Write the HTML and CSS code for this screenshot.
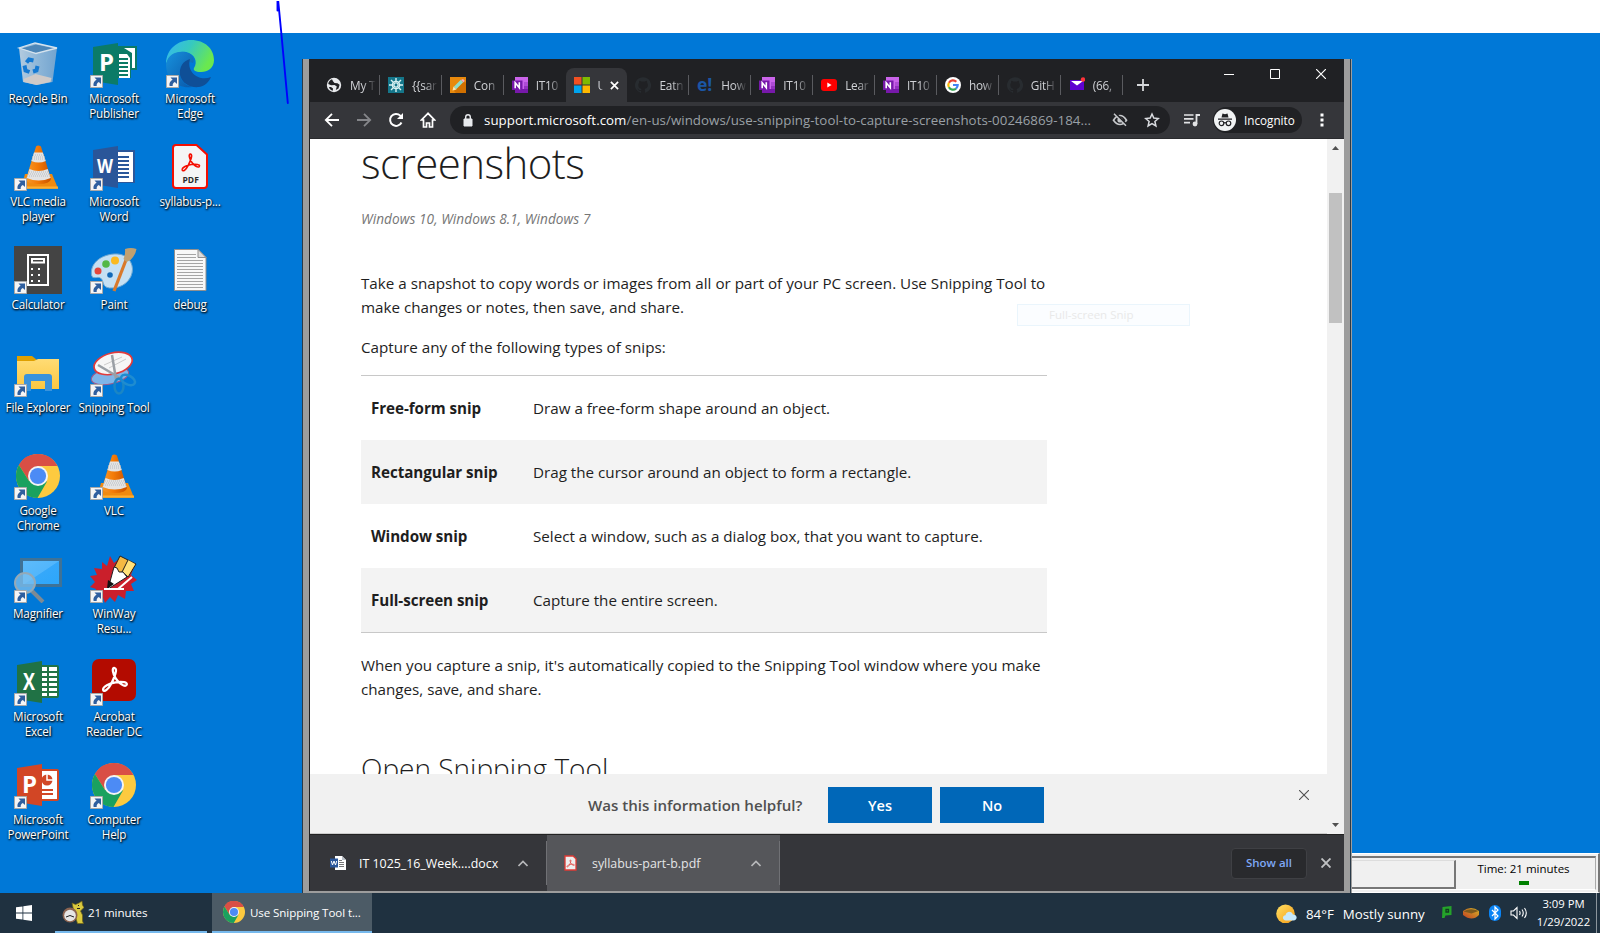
FILE: index.html
```
<!DOCTYPE html>
<html lang="en">
<head>
<meta charset="utf-8">
<title>Desktop</title>
<link rel="stylesheet" href="styles.css">
</head>
<body>
<svg class="defs" width="0" height="0" aria-hidden="true">
  <defs>
    <linearGradient id="edgeA" x1="0" x2="1" y1="0" y2=".4"><stop offset="0" stop-color="#35b5f5"/><stop offset=".5" stop-color="#36c9c0"/><stop offset="1" stop-color="#6ae84f"/></linearGradient>
    <linearGradient id="edgeB" x1="0" x2="1" y1="0" y2="1"><stop offset="0" stop-color="#1791dd"/><stop offset="1" stop-color="#0a57a8"/></linearGradient>
    <linearGradient id="cone" x1="0" x2="1"><stop offset="0" stop-color="#f59a2a"/><stop offset=".45" stop-color="#f47b07"/><stop offset="1" stop-color="#c95200"/></linearGradient>
    <linearGradient id="bin" x1="0" x2="1"><stop offset="0" stop-color="#b4cbdf"/><stop offset=".5" stop-color="#8db6d8"/><stop offset="1" stop-color="#73a4cf"/></linearGradient>
    <linearGradient id="screen" x1="0" x2="1" y1="0" y2="1"><stop offset="0" stop-color="#5fbcfb"/><stop offset=".5" stop-color="#52b6fb"/><stop offset=".52" stop-color="#35a8fa"/><stop offset="1" stop-color="#2ba6fb"/></linearGradient>
    <linearGradient id="sun" x1="0" x2="1" y1="0" y2="1"><stop offset="0" stop-color="#ffe166"/><stop offset="1" stop-color="#f59a12"/></linearGradient>
    <linearGradient id="folder" x1="0" x2="0" y1="0" y2="1"><stop offset="0" stop-color="#ffdc75"/><stop offset="1" stop-color="#fbc741"/></linearGradient>
    <linearGradient id="basket" x1="1" x2="0" y1="0" y2="1"><stop offset="0" stop-color="#d5b528"/><stop offset="1" stop-color="#c23f22"/></linearGradient>
    <symbol id="arrow" viewBox="0 0 13 13"><path fill="#f5f5f5" stroke="#a9a9a9" d="M.5.5h12v12H.5z"/><path fill="#2f5f9f" d="M4.500 2.500H11v6.500L8.800 6.900C7 7.800 6.500 9 6.700 11H3.600C2.800 8 4.400 5.900 6.600 4.700z"/></symbol>
    <symbol id="chrome" viewBox="0 0 48 48"><circle cx="24" cy="24" r="22" fill="#fdca3f"/><path fill="#d94f45" d="M4.900 13A22 22 0 0 1 43.200 13.500L24 14z"/><path fill="#d94f45" d="M4.900 13A22 22 0 0 1 43.300 14H24L15 29z"/><path fill="#1aa15f" d="M4.900 13A22 22 0 0 0 23.500 46L33 29.500 15 29z"/><circle cx="24" cy="24" r="10" fill="#f4f4f4"/><circle cx="24" cy="24" r="8.100" fill="#4c8bf5"/></symbol>
    <symbol id="vlc" viewBox="0 0 48 48"><path fill="#f08a10" d="M11 31h27l6 14.500H7z"/><path fill="#ffae2e" d="M7 43.500h37v2.300H7z"/><path fill="url(#cone)" d="M22 3.500q2-2 5 0L37 36q-1 5-12.500 5T12 36z"/><path fill="#e3e3e3" d="M20 9.500h8.800l3 8.500q-7 3-14.500 0zM15.500 26q9 4 18.200 0l3 9q-12 5-24 0z"/><path fill="none" stroke="#b5bcc2" stroke-dasharray="1 1" d="M19 12h11M18 14h13M18 16h13M15 29h20M14 31h21M13 33h23"/></symbol>
    <symbol id="acro" viewBox="0 0 24 24"><path fill="none" stroke="currentColor" stroke-width="1.900" stroke-linejoin="round" d="M12.200 2.500C9.300 2 10.800 7.500 13 11c2.400 4 7.500 7.600 9 5.500 1.500-2.300-4-3-9-2.200C8 15 2 17.800 2.600 20.600c.7 2.400 4.400-.6 6.800-5.300C12 10 14.800 3 12.200 2.500z"/></symbol>
    <symbol id="onenote" viewBox="0 0 16 16"><path fill="#ca64ea" d="M3 0h13v5H3z"/><path fill="#ca64ea" d="M3 4h9v8H3z"/><path fill="#ae4bd5" d="M12 5h4v4h-4z"/><path fill="#9332bf" d="M12 9h4v3h-4z"/><path fill="#7719aa" d="M3 12h13v4H3zM0 3.500h10.500V13H0z"/><path fill="none" stroke="#fff" stroke-width="1.600" d="M3.200 11.200V5.800L7.300 10.700V5.300"/></symbol>
    <symbol id="github" viewBox="0 0 16 16"><path fill="#282c30" d="M8 .2a8 8 0 0 0-2.500 15.600c.4 0 .5-.2.500-.4v-1.500c-2 .4-2.600-.7-2.800-1.200-.3-.6-.6-.9-1-1.100.8-.1 1.200.3 1.500.8.500.8 1.300.9 2.400.6.1-.5.300-.9.600-1.100-2-.3-3.400-1-3.400-3.800 0-1 .3-1.700.8-2.300-.1-.6-.1-1.300.2-2 .8 0 1.500.4 2 .8a8 8 0 0 1 3.600 0c.6-.4 1.300-.8 2-.8.300.7.300 1.400.2 2 .5.600.8 1.300.8 2.300 0 2.800-1.500 3.500-3.400 3.800.4.400.6 1 .6 1.800v1.700c0 .2.100.4.500.4A8 8 0 0 0 8 .2z"/></symbol>
    <symbol id="globe" viewBox="0 0 16 16"><circle cx="8" cy="8" r="7.200" fill="#e8eaed"/><path fill="#202124" d="M6 2.200C3.800 3 2.400 5 2.300 7l2.800 1.300L8.500 8l2.300 1.500-1 3.500 2.700-1.600 1.100-3.700-2.100-1.500-3-.2L7 4.300zM5 10l2 1.500-.2 2.300C5 13.500 3.500 12 3 10z"/></symbol>
  </defs>
</svg>

<div class="screen">
  <div class="top-blank"></div>
  <div class="desktop">
    <div class="icons">
      <div class="app"><svg class="pic" viewBox="0 0 48 48"><path fill="url(#bin)" d="M5 8l16-5 22 5-4.500 34-16 3L9 42z"/><path fill="#4c86b8" d="M7 8.500l15-4 19 4-17 5z"/><path fill="none" stroke="#d5e3ee" stroke-width="1.300" d="M5 8l17 5.500L43 8 21 3z"/><path fill="#cfcac8" d="M9.500 39l12-5 16 4-1 4-14 3L10 42z"/><g fill="none" stroke="#1479d2" stroke-width="4"><path d="M12.500 22.500l2.500-3 4.500 1M10.500 25.500l1 5 4 1.500M19 31.500l3.500-1 1-4.500"/></g></svg><span>Recycle Bin</span></div>
      <div class="app"><svg class="pic" viewBox="0 0 48 48"><path fill="#0c7a66" d="M28 6h19v24h-6v8H28z"/><path fill="#fff" d="M34 8h11v20h-3V13zM29 14h8l3 4v20H29z"/><path stroke="#0c7a66" stroke-width="2" d="M29 19h9M29 23h9M29 27h9M29 31h9M29 35h9"/><path fill="#0b7b67" d="M3 7l25-4v42L3 41z"/><text x="9" y="31" class="logo">P</text></svg><svg class="lnk"><use href="#arrow"/></svg><span>Microsoft<br>Publisher</span></div>
      <div class="app"><svg class="pic" viewBox="0 0 48 48"><path fill="url(#edgeA)" d="M0 24C0 9 12 0 25 0c14 0 23 9 23 20 0 8-6 12-13 12-6 0-8-2-7-4 4-6 1-14-8-16C11 11 4 15 0 24z"/><path fill="url(#edgeB)" d="M0 24C2 14 11 11 18 12c8 1 11 7 9 11-8-4-15 4-13 12 1 6 5 10 12 12C11 49 0 39 0 24z"/><path fill="#0f4f97" d="M24 19c-7 2-11 8-10 16 2 9 11 13 19 12 6-1 10-5 12-10-12 5-25-5-21-18z"/></svg><svg class="lnk"><use href="#arrow"/></svg><span>Microsoft<br>Edge</span></div>

      <div class="app"><svg class="pic"><use href="#vlc"/></svg><svg class="lnk"><use href="#arrow"/></svg><span>VLC media<br>player</span></div>
      <div class="app"><svg class="pic" viewBox="0 0 48 48"><path fill="#2b579a" d="M26 7h19v33H26z"/><path fill="#fff" d="M27 9h16v30H27z"/><path stroke="#2b579a" stroke-width="2" d="M28 14h11M28 18h11M28 22h11M28 26h11M28 30h11M28 34h11"/><path fill="#2a5699" d="M3 7l25-4v42L3 41z"/><text x="7" y="30" class="logo logo-w" textLength="16" lengthAdjust="spacingAndGlyphs">W</text></svg><svg class="lnk"><use href="#arrow"/></svg><span>Microsoft<br>Word</span></div>
      <div class="app"><svg class="pic" viewBox="0 0 48 48"><path fill="#f5f5f5" stroke="#f40f02" stroke-width="2" d="M10 2h20.500L41 11.500V42q0 3-3 3H10q-3 0-3-3V5q0-3 3-3z"/><svg x="14" y="9" width="21" height="21" color="#f40f02"><use href="#acro"/></svg><text x="16.500" y="39.500" class="logo logo-pdf">PDF</text></svg><span>syllabus-p...</span></div>

      <div class="app"><svg class="pic" viewBox="0 0 48 48"><path fill="#444" d="M0 0h48v48H0z"/><path fill="none" stroke="#fff" stroke-width="2" d="M14 9h20v30H14zM18 13h12v3.500H18z"/><path stroke="#fff" stroke-width="2" stroke-dasharray="2 5" d="M17 23h14M17 29h14M17 35h14"/></svg><svg class="lnk"><use href="#arrow"/></svg><span>Calculator</span></div>
      <div class="app"><svg class="pic" viewBox="0 0 48 48"><path fill="#c5e0f3" stroke="#6ea8d2" d="M24 8C10 9 0 18 1.500 29c1 5 6 1 9 3 4 3 1 9 9 10 13 1 23-8 23-19C42 13 34 7 24 8z"/><circle cx="8" cy="25" r="3.500" fill="#e3463c"/><circle cx="16" cy="18" r="3.800" fill="#53b848"/><circle cx="25" cy="14.500" r="4" fill="#fbb91f"/><circle cx="20" cy="29" r="2.800" fill="#1169b8"/><path stroke="#d9792b" stroke-width="3.200" d="M24 45l12-31"/><path fill="#c0a070" d="M35 3q6-2 11.500 0-1 6-6 11l-4 2-3-3q2-5 1.500-10z"/></svg><svg class="lnk"><use href="#arrow"/></svg><span>Paint</span></div>
      <div class="app"><svg class="pic" viewBox="0 0 48 48"><path fill="#f8f8f8" stroke="#909090" d="M8.500 3.500h23.500l8 8v33H8.500z"/><path fill="#ddd" stroke="#909090" d="M32 3.500v8h8z"/><path stroke="#a5a5a5" d="M11 8.500h19M11 11.500h19M11 14.500h26M11 17.500h26M11 20.500h26M11 23.500h26M11 26.500h26M11 29.500h26M11 32.500h26M11 35.500h26M11 38.500h26M11 41.500h26"/></svg><span>debug</span></div>

      <div class="app"><svg class="pic" viewBox="0 0 48 48"><path fill="#dfa000" d="M3 7h15l5 4v5H3z"/><path fill="url(#folder)" d="M3 12h17l4-2h21v30H3z"/><path fill="#3a93dc" d="M10 28q0-3 3-3h22q3 0 3 3v14h-7V32H17v10h-7z"/></svg><svg class="lnk"><use href="#arrow"/></svg><span>File Explorer</span></div>
      <div class="app"><svg class="pic" viewBox="0 0 48 48"><ellipse cx="20" cy="27" rx="19" ry="8" fill="#7fb5e8" stroke="#a05a8a" transform="rotate(-12 20 27)"/><ellipse cx="23" cy="14.500" rx="19.500" ry="10.500" fill="#f6f6f6" stroke="#e23b3b" stroke-width="1.700" transform="rotate(-14 23 14)"/><path stroke="#ccc" d="M14 16l18-8M19 19l17-9"/><path stroke="#9a9fa5" stroke-width="2.500" d="M22 6l4 24M8 16l22 13"/><ellipse cx="29" cy="37" rx="4.500" ry="7.500" fill="none" stroke="#1b86c4" stroke-width="2.500"/><ellipse cx="38" cy="31" rx="7.500" ry="4.500" fill="none" stroke="#1e8cd0" stroke-width="2.500" transform="rotate(28 38 31)"/></svg><svg class="lnk"><use href="#arrow"/></svg><span>Snipping Tool</span></div>
      <div></div>

      <div class="app"><svg class="pic"><use href="#chrome"/></svg><svg class="lnk"><use href="#arrow"/></svg><span>Google<br>Chrome</span></div>
      <div class="app"><svg class="pic"><use href="#vlc"/></svg><svg class="lnk"><use href="#arrow"/></svg><span>VLC</span></div>
      <div></div>

      <div class="app"><svg class="pic" viewBox="0 0 48 48"><path fill="url(#screen)" stroke="#3f7296" stroke-width="3" d="M7.500 4.500h39v26h-39z"/><path stroke="#7d8a94" stroke-width="4" d="M18 36l11 11"/><circle cx="11" cy="28" r="10" fill="#7fc0ee" fill-opacity=".75" stroke="#93a9b8" stroke-width="2"/></svg><svg class="lnk"><use href="#arrow"/></svg><span>Magnifier</span></div>
      <div class="app"><svg class="pic" viewBox="0 0 48 48"><path fill="#ca1f2b" d="M20 1l4 7 7-6 3 9 10 1-3 8 6 5-6 4 3 7-8 0-1 8-7-4-3 7-5-5-5 6-3-8-8 2 2-8-6-2 5-5-5-6 7-1-3-7 8 1 0-7 5 4z"/><path fill="#f5b942" stroke="#222" d="M30 1l16 8-8 13-5-5-5 1-4-5z"/><path fill="#ffe27a" d="M38 5l7 4-7 12-5-4z"/><path stroke="#222" d="M38 5l-6 12"/><path fill="#fff" stroke="#222" d="M24 12l3 1 2 4 4 0 4 5-19 12z"/><path fill="#111" d="M18 25l6 4-7 5z"/><path fill="none" stroke="#fff" stroke-width="2" d="M14 34h20M28 34l14-12"/></svg><svg class="lnk"><use href="#arrow"/></svg><span>WinWay<br>Resu...</span></div>
      <div></div>

      <div class="app"><svg class="pic" viewBox="0 0 48 48"><path fill="#217346" d="M26 7h17q2 0 2 2v29q0 2-2 2H26z"/><path fill="#fff" d="M27 9h16v29H27z"/><path fill="none" stroke="#217346" stroke-width="2" d="M27 14h16M27 19h16M27 24h16M27 29h16M27 34h16M34 9v29"/><path fill="#207245" d="M3 7l25-4v42L3 41z"/><text x="9" y="32" class="logo" textLength="12" lengthAdjust="spacingAndGlyphs">X</text></svg><svg class="lnk"><use href="#arrow"/></svg><span>Microsoft<br>Excel</span></div>
      <div class="app"><svg class="pic" viewBox="0 0 48 48"><rect x="2" y="1" width="44" height="42" rx="7" fill="#b30b00"/><svg x="10" y="7" width="29" height="29" color="#fff"><use href="#acro"/></svg></svg><svg class="lnk"><use href="#arrow"/></svg><span>Acrobat<br>Reader DC</span></div>
      <div></div>

      <div class="app"><svg class="pic" viewBox="0 0 48 48"><path fill="#d24726" d="M26 8h17q2 0 2 2v28q0 2-2 2H26z"/><path fill="#fff" d="M28 10h15v28H28z"/><circle cx="33" cy="19" r="5.500" fill="#d24726"/><path fill="none" stroke="#fff" stroke-width="1.500" d="M33 13v6h6"/><path stroke="#d24726" stroke-width="2" d="M28 29h11M28 33h11"/><path fill="#d24625" d="M3 7l25-4v42L3 41z"/><text x="8" y="32" class="logo">P</text></svg><svg class="lnk"><use href="#arrow"/></svg><span>Microsoft<br>PowerPoint</span></div>
      <div class="app"><svg class="pic"><use href="#chrome"/></svg><svg class="lnk"><use href="#arrow"/></svg><span>Computer<br>Help</span></div>
      <div></div>
    </div>

    <div class="timer">
      <div class="timer-in"><div class="timer-box"></div><div class="timer-side"><span>Time: 21 minutes</span><i></i></div></div>
    </div>
  </div>

  <div class="taskbar">
    <div class="start"><svg width="16" height="16" viewBox="0 0 16 16"><path fill="#fff" d="M0 2.300l6.500-.9v6.100H0zM7.300 1.200L16 0v7.500H7.300zM0 8.400h6.500v6.200L0 13.700zM7.300 8.400H16V16l-8.700-1.200z"/></svg></div>
    <div class="task t1"><svg width="22" height="24" viewBox="0 0 22 24"><path fill="#d9c93f" stroke="#6e6216" stroke-width=".7" d="M10 3l3.500 1.500L17 3l3-2 .5 4L22 7.500 18.500 11l2 4v6l1 2.500h-6L12 12z"/><circle cx="8" cy="15" r="7.500" fill="#8a6350"/><circle cx="8" cy="15.500" r="5.800" fill="#e6e6e6"/><path fill="none" stroke="#222" d="M4 17l4-1.500 4 1.500M16 5.500h1M15 8.500h3"/></svg><span>21 minutes</span></div>
    <div class="task t2"><svg width="24" height="24"><use href="#chrome"/></svg><span>Use Snipping Tool t...</span></div>
    <div class="fill"></div>
    <div class="weather"><svg width="21" height="20" viewBox="0 0 21 20"><circle cx="9.500" cy="9.800" r="9.300" fill="url(#sun)"/><path fill="#c6e8fb" d="M10 16.500c-4 0-4-5-.5-5.200C10 7 16 6.600 16.800 10.500c5-.3 5 6 .7 6z"/></svg><span>84°F</span><span>Mostly sunny</span></div>
    <div class="tray">
      <svg width="24" height="20" viewBox="0 0 24 20"><path fill="#25a32a" d="M7.500 4l9-1v9l-6 .6L9.500 15H7z"/><path fill="none" stroke="#123f20" stroke-width="1.300" d="M11 6.500h2.500V9H11z"/></svg>
      <svg width="24" height="20" viewBox="0 0 24 20"><path fill="url(#basket)" d="M4 8q8-6 16 0v4q-7 7-16 0z"/><path fill="#7d5a1e" d="M4.500 8.500q7-4 15-.5l-7 2.500z"/></svg>
      <svg width="24" height="20" viewBox="0 0 24 20"><rect x="6" y="2" width="12" height="16" rx="6" fill="#0a84f5"/><path fill="none" stroke="#fff" stroke-width="1.200" d="M9 7l6 6-3 3V4l3 3-6 6"/></svg>
      <svg width="24" height="20" viewBox="0 0 24 20"><path fill="none" stroke="#fff" stroke-width="1.100" d="M4 8v4h2.500l3.500 3.500v-11L6.500 8zM12.500 8q1.200 2 0 4M15 6.500q2.500 3.500 0 7M17.500 5q3.600 5 0 10"/></svg>
    </div>
    <div class="clock"><span>3:09 PM</span><span>1/29/2022</span></div>
  </div>

  <div class="window">
    <div class="tabs">
      <div class="tab"><svg><use href="#globe"/></svg><span>My T</span></div>
      <div class="tab"><svg viewBox="0 0 16 16"><path fill="#15768a" d="M0 0h16v16H0z"/><g stroke="#d8f1f2" stroke-width="1.400"><path d="M8 1v14M1 8h14M3 3l10 10M13 3L3 13"/><circle cx="8" cy="8" r="3.600" fill="none"/></g><circle cx="8" cy="8" r="1.400" fill="#15768a"/></svg><span>{{sar</span></div>
      <div class="tab"><svg viewBox="0 0 16 16"><path fill="#e8890c" d="M0 0h16v16H0z"/><path fill="#d17000" d="M4 14L14 4l2 2v10H6z"/><path stroke="#8fdcc9" stroke-width="3.400" d="M5 11l7-7"/><path fill="#f7a8c4" d="M11 3l2-1 1.500 1.500L14 5.500z"/><path fill="#fbe4b0" d="M2.500 13.500l1-4 3 3z"/></svg><span>Con</span></div>
      <div class="tab"><svg><use href="#onenote"/></svg><span>IT10</span></div>
      <div class="tab active"><svg viewBox="0 0 16 16"><path fill="#f25022" d="M0 0h7.500v7.500H0z"/><path fill="#7fba00" d="M8.500 0H16v7.500H8.500z"/><path fill="#00a4ef" d="M0 8.500h7.500V16H0z"/><path fill="#ffb900" d="M8.500 8.500H16V16H8.500z"/></svg><span>U</span><svg class="x" viewBox="0 0 10 10"><path stroke="#fff" stroke-width="1.900" d="M1 1l8 8M9 1L1 9"/></svg></div>
      <div class="tab"><svg><use href="#github"/></svg><span>Eatn</span></div>
      <div class="tab"><svg viewBox="0 0 16 16"><text x="0" y="14" class="e" textLength="15" lengthAdjust="spacingAndGlyphs">e!</text></svg><span>How</span></div>
      <div class="tab"><svg><use href="#onenote"/></svg><span>IT10</span></div>
      <div class="tab"><svg viewBox="0 0 16 16"><rect y="2" width="16" height="12" rx="3" fill="#f00"/><path fill="#fff" d="M6.300 5.500v5L10.600 8z"/></svg><span>Lear</span></div>
      <div class="tab"><svg><use href="#onenote"/></svg><span>IT10</span></div>
      <div class="tab"><svg viewBox="0 0 16 16"><circle cx="8" cy="8" r="8" fill="#fff"/><g fill="none" stroke-width="2.200"><path stroke="#ea4335" d="M3.900 5.700A4.700 4.700 0 0 1 11.300 4.700"/><path stroke="#fbbc05" d="M3.900 5.700a4.700 4.700 0 0 0 0 4.600"/><path stroke="#34a853" d="M3.900 10.300A4.700 4.700 0 0 0 11 11.600"/><path stroke="#4285f4" d="M11 11.600A4.700 4.700 0 0 0 12.700 8H8"/></g></svg><span>how</span></div>
      <div class="tab"><svg><use href="#github"/></svg><span>GitH</span></div>
      <div class="tab"><svg viewBox="0 0 16 16"><path fill="#5f01d1" d="M1 3h14v10H1z"/><path fill="#fff" d="M2 4h12L8 8.500z"/><circle cx="14" cy="2.500" r="2.200" fill="#ff333a"/></svg><span>(66,</span></div>
      <svg class="plus" viewBox="0 0 12 12"><path stroke="#d5d7da" stroke-width="1.800" d="M6 0v12M0 6h12"/></svg>
      <div class="fill"></div>
      <div class="controls"><svg width="10" height="10"><path stroke="#fff" d="M0 5.500h10"/></svg><svg width="10" height="10"><path fill="none" stroke="#fff" d="M.5.500h9v9h-9z"/></svg><svg width="10" height="10"><path stroke="#fff" stroke-width="1.200" d="M0 0l10 10M10 0L0 10"/></svg></div>
    </div>

    <div class="toolbar">
      <svg viewBox="0 0 16 16"><path fill="none" stroke="#fff" stroke-width="1.800" d="M15 8H2M8 1.800L1.800 8 8 14.200"/></svg>
      <svg viewBox="0 0 16 16"><path fill="none" stroke="#85868a" stroke-width="1.800" d="M1 8h13M8 1.800L14.200 8 8 14.200"/></svg>
      <svg viewBox="0 0 16 16"><path fill="none" stroke="#fff" stroke-width="2" d="M13.500 10.500A6 6 0 1 1 12.300 3.600L14 5.300"/><path fill="#fff" d="M15 1v6H9z"/></svg>
      <svg viewBox="0 0 16 16"><path fill="none" stroke="#fff" stroke-width="1.700" d="M8 1.300L1.500 8H3.500v7H6.500v-4h3v4h3V8h2z"/></svg>
      <div class="omni">
        <svg width="10" height="13" viewBox="0 0 10 13"><path fill="#e8eaed" d="M1 5h8v7H1z" stroke="#e8eaed"/><path fill="none" stroke="#e8eaed" stroke-width="1.400" d="M2.700 5V3a2.300 2.300 0 0 1 4.600 0v2"/></svg>
        <span class="url"><b>support.microsoft.com</b>/en-us/windows/use-snipping-tool-to-capture-screenshots-00246869-184...</span>
        <svg width="16" height="14" viewBox="0 0 16 14"><path fill="none" stroke="#c6c8cb" stroke-width="1.700" d="M1.500 7.200Q4.500 2.500 8 2.500t6.500 4.700Q11.500 11.500 8 11.500t-6.500-4.300z"/><circle cx="8" cy="7" r="2.600" fill="#c6c8cb"/><path stroke="#202124" stroke-width="2" d="M3.500.5l12 12"/><path stroke="#c6c8cb" stroke-width="1.500" d="M2 .8l12 12"/></svg>
        <svg width="16" height="16" viewBox="0 0 16 16"><path fill="none" stroke="#dadce0" stroke-width="1.500" d="M8 2l1.800 4.100 4.500.4-3.400 3 1 4.400L8 11.600l-3.900 2.300 1-4.400-3.400-3 4.500-.4z"/></svg>
      </div>
      <svg class="list" viewBox="0 0 16 14"><path stroke="#e2e3e5" stroke-width="1.700" d="M0 2h9.500M0 5.800h9.500M0 9.600h6"/><path fill="none" stroke="#e2e3e5" stroke-width="1.800" d="M12.500 11V2H16"/><circle cx="11" cy="11" r="2.400" fill="#e2e3e5"/></svg>
      <div class="incog"><svg width="22" height="22" viewBox="0 0 22 22"><circle cx="11" cy="11" r="11" fill="#f1f3f4"/><path fill="#202124" d="M7.500 8.500L8.500 4.600l2.500.7 2.500-.7 1 3.900zM4 9.600h14v1.200H4z"/><g fill="none" stroke="#202124" stroke-width="1.200"><circle cx="7.500" cy="14.300" r="2.300"/><circle cx="14.500" cy="14.300" r="2.300"/><path d="M9.800 14q1.200-.8 2.400 0"/></g></svg><span>Incognito</span></div>
      <svg class="dots" viewBox="0 0 4 14"><path fill="#fff" d="M.5.500h3v3h-3zM.5 5.500h3v3h-3zM.5 10.500h3v3h-3z"/></svg>
    </div>

    <div class="view">
      <div class="page">
        <div class="article">
          <h1>screenshots</h1>
          <p class="applies">Windows 10, Windows 8.1, Windows 7</p>
          <p class="intro">Take a snapshot to copy words or images from all or part of your PC screen. Use Snipping Tool to<br>make changes or notes, then save, and share.</p>
          <p class="cap">Capture any of the following types of snips:</p>
          <div class="table">
            <div class="row"><b>Free-form snip</b><span>Draw a free-form shape around an object.</span></div>
            <div class="row"><b>Rectangular snip</b><span>Drag the cursor around an object to form a rectangle.</span></div>
            <div class="row"><b>Window snip</b><span>Select a window, such as a dialog box, that you want to capture.</span></div>
            <div class="row"><b>Full-screen snip</b><span>Capture the entire screen.</span></div>
          </div>
          <p class="after">When you capture a snip, it's automatically copied to the Snipping Tool window where you make<br>changes, save, and share.</p>
          <h2>Open Snipping Tool</h2>
        </div>
        <div class="helpful">
          <span class="q">Was this information helpful?</span><div class="btn">Yes</div><div class="btn">No</div>
          <svg class="hx" width="10" height="10"><path stroke="#505050" stroke-width="1.100" d="M0 0l10 10M10 0L0 10"/></svg>
        </div>
      </div>
      <div class="scroll"><svg width="17" height="17"><path fill="#505050" d="M5 11h7L8.500 7z"/></svg><div class="thumb"></div><div class="fill"></div><svg width="17" height="17"><path fill="#505050" d="M5 6h7l-3.500 4z"/></svg></div>
      <div class="ghost">Full-screen Snip</div>
    </div>

    <div class="downloads">
      <div class="dl d1"><svg width="16" height="16" viewBox="0 0 16 16"><path fill="#fff" d="M5 1h7l4 4v10H5z"/><path fill="#b9c0c8" d="M12 1v4h4z"/><path stroke="#777" d="M9 5.500h3M9 7.500h5M9 9.500h5M9 11.500h5"/><path fill="#2b579a" d="M0 3.500h8v9H0z"/><path fill="none" stroke="#fff" d="M1.300 6l1.200 4L4 6l1.500 4 1.200-4"/></svg><span>IT 1025_16_Week....docx</span><svg class="chev" width="10" height="7"><path fill="none" stroke="#b8b9bb" stroke-width="1.600" d="M.5 6L5 1.500 9.500 6"/></svg></div>
      <div class="dl d2"><svg width="16" height="16" viewBox="0 0 16 16"><path fill="#eee" stroke="#e03a34" stroke-width="1.300" d="M3.500 1h6.500L13 3.800V15H2V1z"/><svg x="3" y="4" width="9" height="9" color="#e03a34"><use href="#acro"/></svg></svg><span>syllabus-part-b.pdf</span><svg class="chev" width="10" height="7"><path fill="none" stroke="#b8b9bb" stroke-width="1.600" d="M.5 6L5 1.500 9.500 6"/></svg></div>
      <div class="fill"></div>
      <div class="showall">Show all</div>
      <svg class="dx" width="10" height="10"><path stroke="#c0c1c3" stroke-width="1.900" d="M.5.500l9 9M9.500.500l-9 9"/></svg>
    </div>
  </div>

  <svg class="pen" width="20" height="110"><path fill="none" stroke="#00f" stroke-width="1.900" stroke-linecap="round" d="M7.500 10.500V2h.8l3 31 6.500 70"/></svg>
</div>
</body>
</html>
```
FILE: styles.css
```
* { box-sizing: border-box; }
body { margin: 0; font-family: "Open Sans", "Noto Sans", sans-serif; }
.defs { position: absolute; }
.screen { position: relative; width: 1600px; height: 933px; overflow: hidden; display: flex; flex-direction: column; background: #0078d7; }
.top-blank { height: 33px; background: #fff; }
.desktop { flex: 1; position: relative; padding: 7px 0 0; }
.fill { flex: 1; }
svg { display: block; flex: none; }
p, h1, h2 { margin: 0; }

/* desktop icons */
.icons { display: grid; grid-template-columns: repeat(3, 76px); grid-auto-rows: 103px; }
.app { position: relative; display: flex; flex-direction: column; align-items: center; gap: 2.500px; color: #fff; text-align: center; font-size: 11.700px; line-height: 15px; white-space: nowrap; text-shadow: 1px 1px 2px #000, 0 1px 2px rgba(0,0,0,.8); }
.app span { letter-spacing: -.2px; }
.pic { width: 48px; height: 48px; }
.lnk { position: absolute; left: 14px; top: 35px; width: 13px; height: 13px; }
.logo { font: bold 24px "Open Sans", sans-serif; fill: #fff; text-shadow: none; }
.logo-w { font-size: 20px; }
.logo-pdf { font-size: 8.500px; fill: #2c2c2c; }

/* timer strip */
.timer { position: absolute; right: 0; bottom: 0; width: 249px; height: 40px; background: #f0f0f0; border: 1px solid #fff; border-right: 2px solid #777; padding: 2px 2px 2px 0; }
.timer-in { height: 100%; display: flex; border-top: 2px solid #777; border-right: 1px solid #aaa; border-bottom: 1px solid #fff; }
.timer-box { width: 104px; height: 29px; margin-top: 2px; border-top: 1px solid #ddd; border-right: 2px solid #777; border-bottom: 2px solid #777; }
.timer-side { flex: 1; display: flex; flex-direction: column; align-items: center; padding: 2px 4px 0 0; font-size: 11.500px; line-height: 18px; color: #000; }
.timer-side i { width: 10px; height: 4px; margin-top: 3px; background: #008000; }

/* taskbar */
.taskbar { height: 40px; background: #1f3140; display: flex; color: #fff; font-size: 11.600px; }
.start { width: 55px; padding: 12px 0 0 16px; }
.task { display: flex; align-items: center; border-bottom: 2px solid #76b9ed; white-space: nowrap; letter-spacing: -.1px; }
.t1 { width: 152px; padding-left: 7px; gap: 4px; }
.t2 { width: 160px; margin-left: 5px; padding-left: 10px; gap: 4px; background: #4c5b66; }
.weather { display: flex; align-items: center; gap: 9px; width: 159px; padding-top: 1px; font-size: 13.300px; white-space: nowrap; }
.tray { display: flex; align-items: center; }
.clock { width: 66px; margin-right: 3px; border-right: 1px solid #8b959d; display: flex; flex-direction: column; align-items: center; line-height: 18px; padding: 2px 0 0; font-size: 11.300px; }

/* browser window */
.window { position: absolute; left: 302px; top: 59px; width: 1050px; height: 834px; border: solid #9d9d9d; border-width: 0 7px 2px; display: flex; flex-direction: column; background: #202124; padding: 0 0 0 1px; }
.window::before, .window::after { content: ""; position: absolute; top: 0; bottom: -2px; width: 1px; background: #2a3a48; }
.window::before { left: -7px; }
.window::after { right: -7px; }
.window { border-right-width: 8px; }
.tabs { height: 43px; display: flex; padding-left: 8px; position: relative; }
.tab { width: 61.900px; height: 34px; margin-top: 9px; padding-left: 8px; display: flex; align-items: center; gap: 8px; position: relative; color: #d0d2d6; font-size: 11.800px; line-height: 18px; letter-spacing: -.2px; }
.tab::after { content: ""; position: absolute; right: 0; top: 7px; width: 1px; height: 20px; background: #5a5b5f; }
.tab > svg { width: 16px; height: 16px; }
.tab span { width: 26px; white-space: nowrap; -webkit-mask-image: linear-gradient(90deg, #000 50%, transparent 100%); mask-image: linear-gradient(90deg, #000 50%, transparent 100%); }
.tab.active { background: #35363a; border-radius: 8px 8px 0 0; }
.tab.active span { width: 5px; overflow: hidden; }
.tab.active .x { width: 9px; height: 9px; margin-left: -1px; }
.tab.active::after, .tab:has(+ .active)::after { display: none; }
.e { font: bold 18px "Open Sans", sans-serif; fill: #1b56a5; }
.plus { width: 12px; height: 12px; margin: 20px 0 0 14px; }
.controls { display: flex; gap: 36px; padding: 10px 18px 0 0; }
.toolbar { height: 37px; background: #35363a; display: flex; align-items: center; padding-left: 14px; border-bottom: 1px solid #2a2b2e; }
.toolbar > svg { width: 16px; height: 16px; margin-right: 16px; }
.omni { width: 720px; height: 28px; margin-left: -2px; border-radius: 14px; background: #202124; display: flex; align-items: center; padding-left: 13px; }
.url { width: 628px; margin: 0 0 0 11px; white-space: nowrap; font-size: 13.300px; letter-spacing: .04px; color: #9aa0a6; }
.url b { font-weight: 400; color: #fff; }
.omni svg + svg { margin-left: 16px; }
.toolbar > .list { margin: 0 13px 0 14px; height: 14px; }
.incog { width: 89px; height: 26px; border-radius: 13px; background: #202124; display: flex; align-items: center; gap: 8px; padding-left: 1px; color: #fff; font-size: 11.700px; }
.toolbar > .dots { width: 4px; height: 14px; margin: 0 0 0 18px; }

.view { height: 696px; display: flex; position: relative; background: #fff; border-bottom: 1px solid #222; }
.page { width: 1017px; height: 695px; display: flex; flex-direction: column; }
.article { height: 635px; padding: 0 0 0 51px; overflow: hidden; color: #1e1e1e; font-size: 15.200px; line-height: 24px; white-space: nowrap; }
h1 { font-weight: 300; font-size: 42px; letter-spacing: -.55px; line-height: 56px; margin-top: -4px; height: 55px; }
.applies { font-size: 13.600px; font-style: italic; color: #767676; margin-top: 17px; letter-spacing: .07px; }
.intro { margin-top: 40px; }
.cap { margin-top: 16px; }
.table { width: 686px; margin-top: 16px; border-top: 1px solid #c8c8c8; border-bottom: 1px solid #c8c8c8; }
.row { height: 64px; display: flex; align-items: center; padding-left: 10px; }
.row:nth-child(even) { background: #f3f3f3; }
.row b { width: 162px; font-weight: 700; letter-spacing: -.06px; }
.after { margin-top: 20px; }
h2 { font-weight: 300; font-size: 28px; line-height: 38px; margin-top: 48px; }
.helpful { height: 60px; background: #f1f1f1; border-bottom: 1px solid #ccc; display: flex; align-items: center; padding: 3px 18px 0 278px; font-size: 15.100px; font-weight: 600; color: #505050; }
.q { width: 240px; white-space: nowrap; }
.btn { width: 104px; height: 36px; margin-right: 8px; background: #0067b8; color: #fff; line-height: 37px; text-align: center; font-size: 14.500px; }
.hx { margin: 0 0 21px auto; }
.scroll { width: 17px; height: 695px; background: #f1f1f1; display: flex; flex-direction: column; align-items: center; }
.thumb { width: 13px; height: 130px; margin-top: 37px; background: #c1c1c1; }
.ghost { position: absolute; left: 707px; top: 165px; width: 173px; height: 22px; border: 1px solid #eaf5fc; background: #fbfdff; color: #e9e9e9; font-size: 11.500px; line-height: 20px; padding-left: 31px; }

.downloads { flex: 1; display: flex; background: #35363a; color: #fff; font-size: 12.400px; align-items: center; white-space: nowrap; }
.dl { height: 56px; display: flex; align-items: center; position: relative; }
.dl::after { content: ""; position: absolute; right: 0; top: 6px; width: 1px; height: 44px; background: #707175; }
.d1 { width: 237px; padding-left: 20px; }
.d1 span { margin-left: 13px; width: 159px; }
.d2 { width: 233px; padding-left: 16px; background: #55565a; color: #e4e5e7; }
.d2 span { margin-left: 13px; width: 159px; }
.showall { width: 76px; height: 31px; border: 1px solid #3f4044; border-radius: 4px; background: #292a2d; color: #7fa8f5; font-size: 11.500px; font-weight: 600; line-height: 28px; text-align: center; }
.dx { margin: 0 13px 0 14px; }
.pen { position: absolute; left: 270px; top: 0; }
```
